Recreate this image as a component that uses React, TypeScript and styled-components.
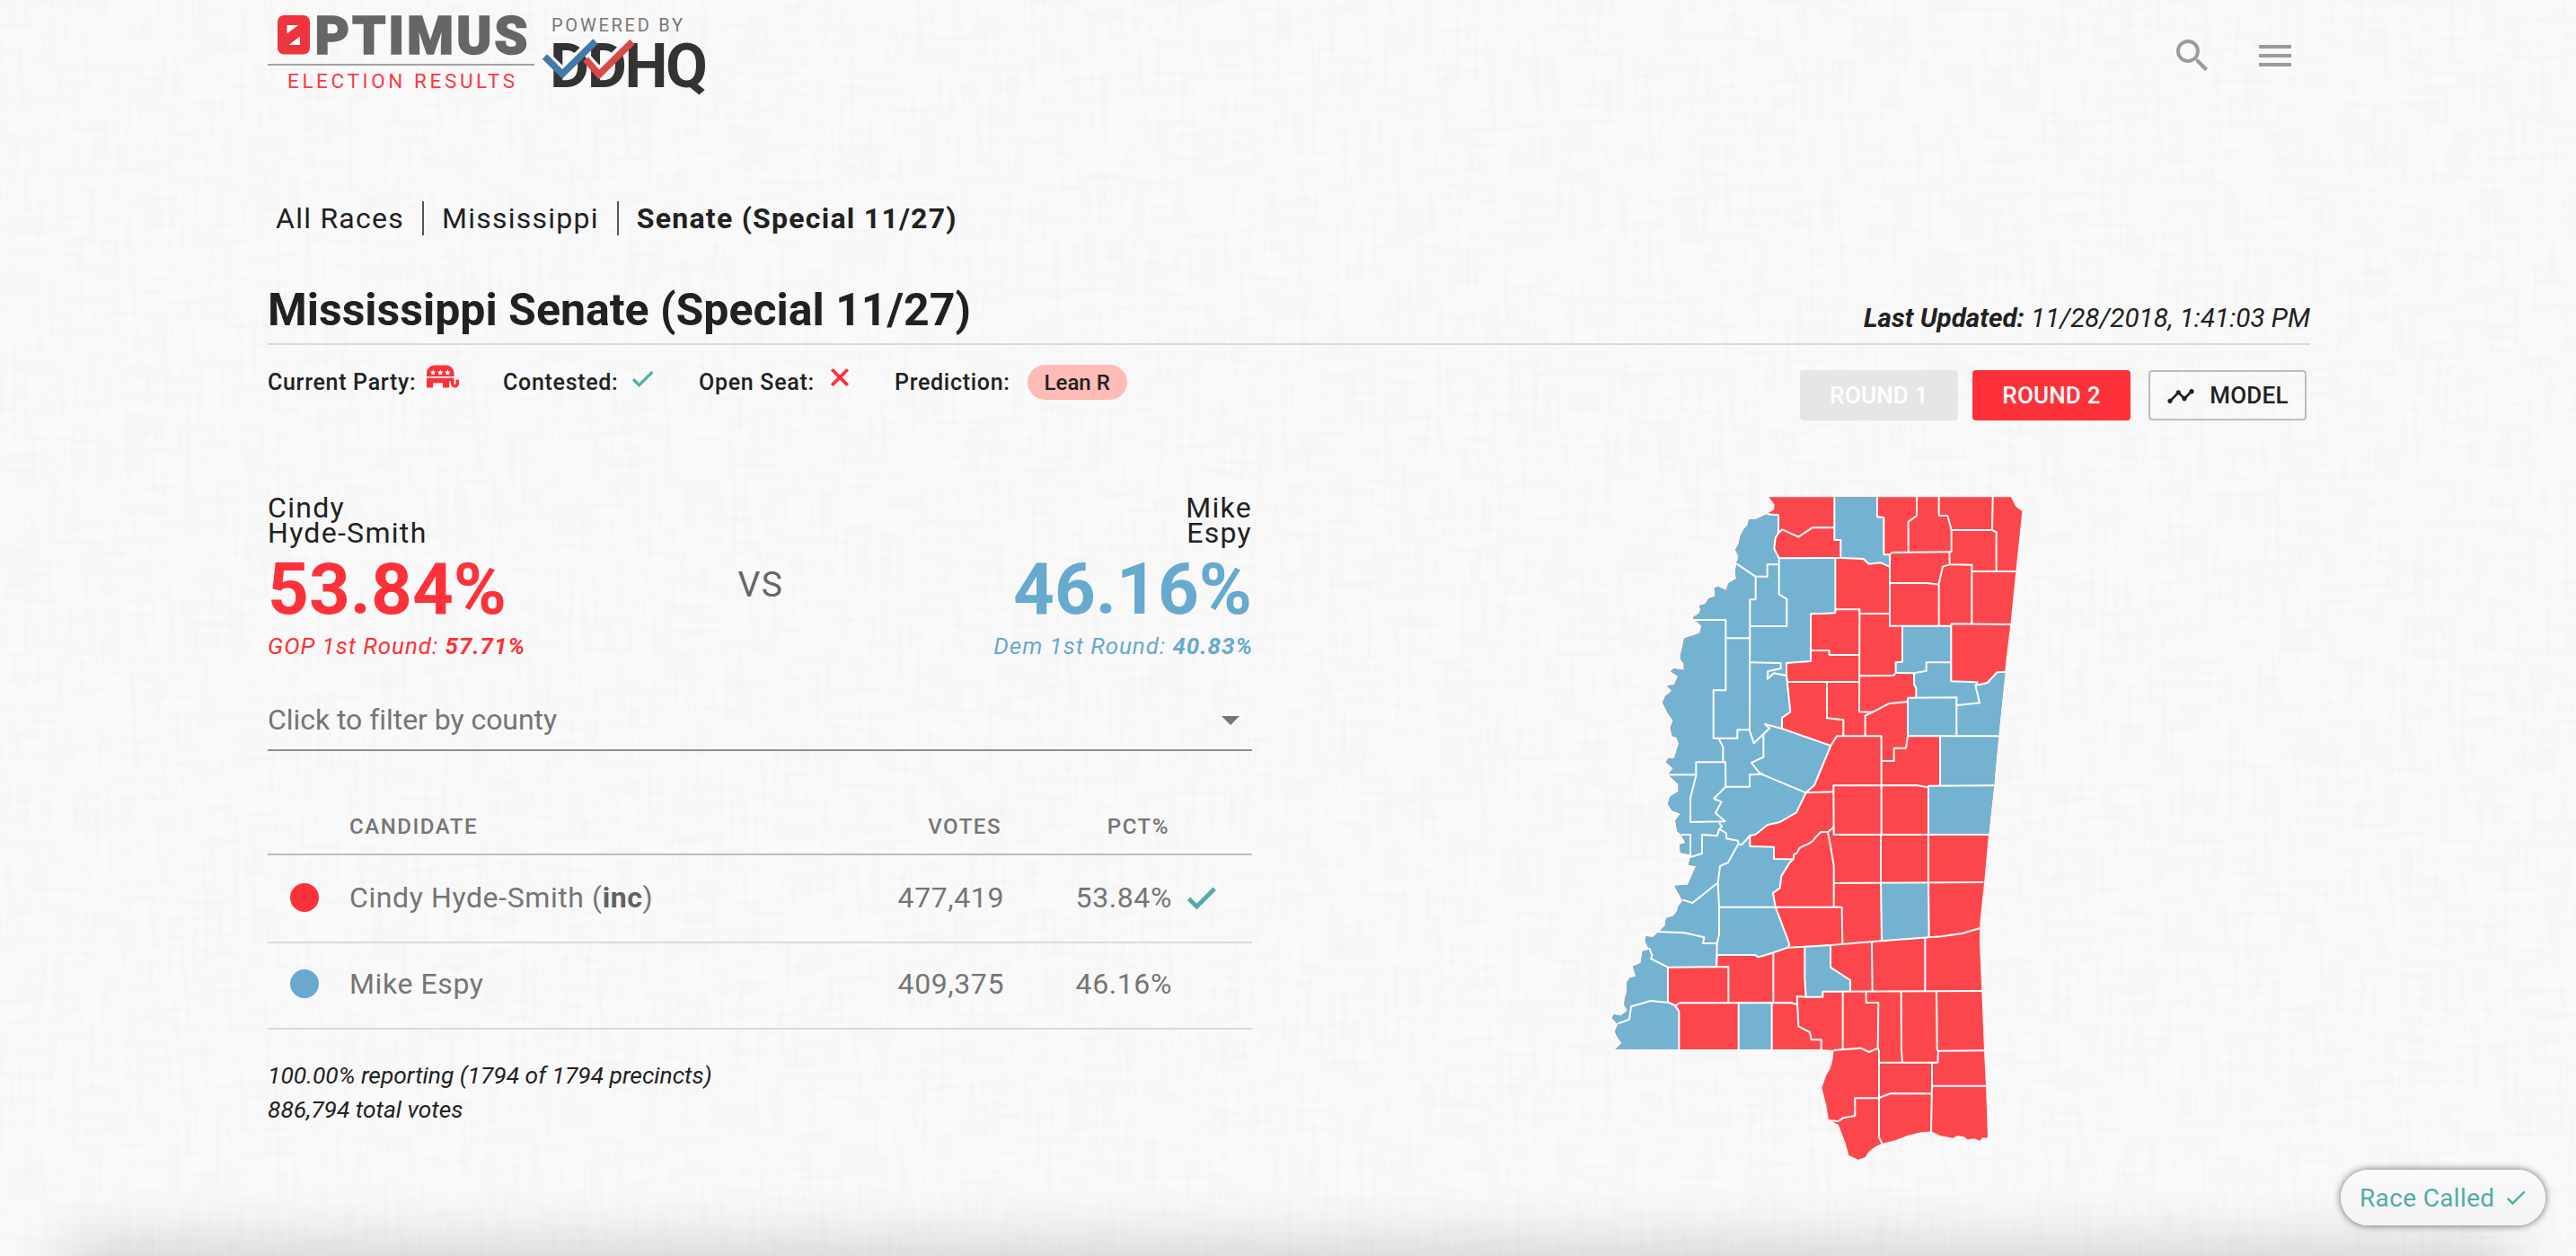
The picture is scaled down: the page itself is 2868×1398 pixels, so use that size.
import React from "react";
import styled, { createGlobalStyle } from "styled-components";
import { MdSearch, MdMenu, MdCheck, MdClose, MdTimeline, MdArrowDropDown } from "react-icons/md";
import { FaRepublican } from "react-icons/fa";

const GOP = "#fd3139";
const DEM = "#67a9cf";
const TEAL = "#4fada7";
const INK = "#212121";
const MUTED = "#757575";

const GlobalStyle = createGlobalStyle`
  html, body { margin: 0; padding: 0; }
  body {
    background: #fafafa;
    color: ${INK};
    font-family: Roboto, "Liberation Sans", sans-serif;
    overflow: hidden;
  }
  * { box-sizing: border-box; }
  svg path[fill="none"] { stroke: none; }
`;

const Page = styled.div`
  position: relative;
  width: 100%;
  height: 1398px;
  overflow: hidden;
`;

const Linen = styled.svg`
  position: absolute;
  inset: 0;
  width: 100%;
  height: 100%;
`;

const Container = styled.div`
  position: relative;
  width: 2274px;
  margin: 0 auto 0 298px;
  display: flex;
  flex-direction: column;
`;

const Header = styled.header`
  height: 224px;
  display: flex;
  align-items: flex-start;
  justify-content: space-between;
`;

const Logo = styled.svg`
  display: block;
  width: 500px;
  height: 120px;
  font-family: Roboto, "Liberation Sans", sans-serif;
`;

const HeaderActions = styled.div`
  display: flex;
  gap: 44px;
  padding: 38px 15px 0 0;
  color: #9b9b9b;
  svg { display: block; }
`;

const Crumbs = styled.nav`
  display: flex;
  align-items: center;
  height: 38px;
  padding-left: 9px;
  font-size: 32px;
  line-height: 38px;
  letter-spacing: 1.25px;
`;

const Crumb = styled.span<{ $current?: boolean }>`
  font-weight: ${(p) => (p.$current ? 700 : 400)};
  height: 38px;
  & + & {
    margin-left: 20px;
    padding-left: 20px;
    border-left: 2px solid #555;
  }
`;

const TitleRow = styled.div`
  display: flex;
  justify-content: space-between;
  align-items: flex-end;
  margin-top: 53px;
  padding-bottom: 7px;
  border-bottom: 2px solid #dadada;
`;

const Title = styled.h1`
  margin: 0;
  font-size: 50px;
  line-height: 60px;
  font-weight: 700;
`;

const Updated = styled.div`
  font-size: 29.6px;
  line-height: 41px;
  font-style: italic;
  b { font-weight: 700; }
`;

const MetaRow = styled.div`
  display: flex;
  justify-content: space-between;
  align-items: flex-start;
  height: 84px;
`;

const Facts = styled.div`
  display: flex;
  padding-top: 22px;
  font-size: 25px;
  line-height: 40px;
  font-weight: 500;
  letter-spacing: 0.7px;
`;

const Fact = styled.div<{ $width: number; $gap?: number }>`
  display: flex;
  width: ${(p) => p.$width}px;
  gap: ${(p) => p.$gap ?? 12}px;
  svg { display: block; flex: none; }
`;

const Chip = styled.span`
  height: 39px;
  padding: 0 19px;
  border-radius: 20px;
  background: #ffbcb7;
  font-size: 24px;
  letter-spacing: 0;
`;

const Actions = styled.div`
  display: flex;
  padding: 28px 4px 0 0;
`;

const Button = styled.button<{ $kind: "off" | "on" | "outline" }>`
  width: 176px;
  height: 56px;
  margin-left: ${(p) => (p.$kind === "outline" ? 20 : 16)}px;
  padding: 1px 0 0;
  display: flex;
  align-items: center;
  justify-content: center;
  gap: 16px;
  border: ${(p) => (p.$kind === "outline" ? "2px solid #bdbdbd" : "0")};
  border-radius: 4px;
  background: ${(p) => (p.$kind === "off" ? "#e6e6e6" : p.$kind === "on" ? GOP : "transparent")};
  color: ${(p) => (p.$kind === "outline" ? INK : "#fff")};
  font: 500 26px/55px Roboto, "Liberation Sans", sans-serif;
  letter-spacing: 0.2px;
`;

const Content = styled.main`
  display: flex;
  align-items: flex-start;
  margin-top: 83px;
`;

const Results = styled.section`
  width: 1096px;
  display: flex;
  flex-direction: column;
`;

const Duel = styled.div`
  display: flex;
  justify-content: space-between;
`;

const Contender = styled.div<{ $color: string; $right?: boolean }>`
  width: 400px;
  color: ${(p) => p.$color};
  text-align: ${(p) => (p.$right ? "right" : "left")};
`;

const Name = styled.div`
  color: ${INK};
  font-size: 32px;
  line-height: 28px;
  letter-spacing: 1.3px;
`;

const Percent = styled.div`
  margin-top: 9px;
  font-size: 80px;
  line-height: 80px;
  font-weight: 700;
`;

const FirstRound = styled.div`
  margin: 8px -1px 0 0;
  font-size: 26px;
  line-height: 30px;
  font-style: italic;
  letter-spacing: 0.95px;
`;

const Versus = styled.div`
  padding: 80px 0 0 2px;
  font-size: 39px;
  line-height: 40px;
  letter-spacing: 1.5px;
  color: #666;
`;

const Filter = styled.div`
  display: flex;
  justify-content: space-between;
  align-items: center;
  height: 71px;
  margin-top: 31px;
  padding-top: 2px;
  border-bottom: 2px solid #8f8f8f;
  color: ${MUTED};
  font-size: 32px;
  letter-spacing: -0.05px;
`;

const Row = styled.div<{ $head?: boolean; $first?: boolean }>`
  display: grid;
  grid-template-columns: ${(p) => (p.$head ? "91px 1fr 180px 187px 92px" : "91px 1fr 180px 187px 89px")};
  align-items: center;
  height: ${(p) => (p.$head ? 64 : p.$first ? 98 : 96)}px;
  margin-top: ${(p) => (p.$head ? 52 : 0)}px;
  padding-top: ${(p) => (p.$head ? 1 : 0)}px;
  padding-bottom: ${(p) => (p.$head ? 0 : p.$first ? 2 : 4)}px;
  border-bottom: 2px solid ${(p) => (p.$head ? "#bdbdbd" : "#dadada")};
  color: ${MUTED};
  font-size: ${(p) => (p.$head ? 24 : 32)}px;
  font-weight: ${(p) => (p.$head ? 500 : 400)};
  letter-spacing: ${(p) => (p.$head ? 1.55 : 0.6)}px;
  b { color: #616161; font-weight: 700; }
  svg { display: block; margin-left: 12px; }
`;

const Cell = styled.div<{ $right?: boolean }>`
  text-align: ${(p) => (p.$right ? "right" : "left")};
`;

const Dot = styled.span<{ $color: string }>`
  width: 32px;
  height: 32px;
  margin-left: 25px;
  border-radius: 50%;
  background: ${(p) => p.$color};
`;

const Reporting = styled.div`
  margin-top: 32px;
  font-size: 26.4px;
  line-height: 38px;
  font-style: italic;
`;

const CountyMap = styled.svg`
  display: block;
  width: 464px;
  height: 742px;
  margin-left: 396px;
`;

const FooterEdge = styled.div`
  position: absolute;
  left: 80px;
  right: 80px;
  top: 1402px;
  height: 40px;
  box-shadow: 0 0 70px 10px rgba(0, 0, 0, 0.2);
`;

const RaceCalled = styled.div`
  position: absolute;
  right: 34px;
  bottom: 34px;
  width: 228px;
  height: 62px;
  display: flex;
  align-items: center;
  gap: 9px;
  padding-left: 21px;
  border-radius: 31px;
  background: linear-gradient(#fafafa, #f4f4f4);
  box-shadow: 0 0 8px rgba(0, 0, 0, 0.6);
  color: ${TEAL};
  font-size: 28px;
  letter-spacing: 0.35px;
`;

const STATE =
  "568,40 1377,40 1393,72 1414,87 1393,288 1375,465 1362,570 1335,838 1320,1003 1302,1167 1288,1320 1273,1460 1272,1530 1279,1690 1287,1888 1293,2006 1299,2175 1295,2180 1282,2178 1273,2189 1255,2182 1232,2185 1220,2176 1199,2172 1183,2180 1140,2172 1111,2158 1075,2161 1030,2172 990,2188 946,2198 925,2208 902,2225 890,2244 866,2252 835,2237 825,2200 810,2160 800,2135 768,2120 760,2070 745,2012 760,1970 772,1950 780,1925 785,1887 744,1884 55,1884 77,1864 62,1842 54,1825 64,1800 44,1780 50,1768 73,1772 96,1755 85,1735 87,1715 94,1690 94,1660 103,1646 124,1640 114,1607 140,1596 146,1557 168,1551 155,1522 158,1507 180,1510 205,1488 222,1470 225,1446 247,1440 262,1423 265,1408 280,1388 253,1338 297,1335 325,1272 300,1268 306,1240 303,1233 273,1227 270,1200 290,1195 275,1167 262,1155 256,1120 273,1097 245,1087 231,1065 238,1040 266,1023 266,998 232,967 248,946 225,925 232,912 252,913 267,863 260,842 245,838 239,810 248,787 230,760 213,726 222,705 244,687 228,670 252,667 265,638 240,622 250,613 284,618 284,595 275,585 272,570 280,540 285,512 300,507 337,495 343,470 330,457 316,450 316,440 334,430 340,418 336,403 356,397 367,378 389,372 386,345 397,338 425,352 433,328 459,312 456,290 460,262 467,238 456,215 468,195 472,172 485,147 498,133 501,115 524,115 562,97 568,92 585,82 587,65";

const DEM_AREAS = [
  "562,97 600,100 600,160 590,176 586,212 602,244 790,245 788,427 708,430 708,588 627,594 627,636 640,757 612,777 612,813 775,870 720,1002 692,1027 660,1093 605,1125 563,1135 523,1167 505,1170 505,1206 585,1208 585,1248 645,1249 638,1260 610,1305 605,1345 582,1362 590,1408 637,1533 632,1544 580,1562 533,1576 522,1569 395,1569 393,1607 231,1610 231,1727 255,1738 268,1757 268,1884 55,1884 77,1864 62,1842 54,1825 64,1800 44,1780 50,1768 73,1772 96,1755 85,1735 87,1715 94,1690 94,1660 103,1646 124,1640 114,1607 140,1596 146,1557 168,1551 155,1522 158,1507 180,1510 205,1488 222,1470 225,1446 247,1440 262,1423 265,1408 280,1388 253,1338 297,1335 325,1272 300,1268 306,1240 303,1233 273,1227 270,1200 290,1195 275,1167 262,1155 256,1120 273,1097 245,1087 231,1065 238,1040 266,1023 266,998 232,967 248,946 225,925 232,912 252,913 267,863 260,842 245,838 239,810 248,787 230,760 213,726 222,705 244,687 228,670 252,667 265,638 240,622 250,613 284,618 284,595 275,585 272,570 280,540 285,512 300,507 337,495 343,470 330,457 316,450 316,440 334,430 340,418 336,403 356,397 367,378 389,372 386,345 397,338 425,352 433,328 459,312 456,290 460,262 467,238 456,215 468,195 472,172 485,147 498,133 501,115 524,115",
  "787,40 930,40 930,106 952,108 952,232 972,232 970,272 942,259 902,263 884,246 808,243 808,183 787,183",
  "1014,470 1177,470 1177,655 1265,658 1258,669 1298,660 1330,625 1358,623 1335,838 1032,838 1032,710 1060,708 1060,678 1053,665 1053,628 992,627 992,592 1014,590",
  "1140,838 1335,838 1320,1003 1140,1003",
  "1101,1006 1320,1003 1302,1166 1101,1166",
  "944,1330 1101,1328 1103,1510 945,1520",
  "688,1543 774,1536 774,1610 840,1653 840,1690 748,1692 748,1709 692,1709 688,1648",
  "467,1730 578,1730 578,1884 467,1884",
];

const BORDERS = [
  "562,97 600,100 600,160 590,176 586,212 602,244",
  "600,160 613,148 667,173 713,142 787,142",
  "787,40 787,183 808,183 808,243",
  "602,244 808,243 884,246 902,263 942,259 970,272",
  "930,40 930,106 952,108 952,232 972,232 980,225 1178,223",
  "1062,40 1062,102 1034,122 1034,222",
  "1136,40 1136,101 1165,102 1178,150 1178,223",
  "1178,150 1314,150",
  "1316,40 1314,150 1328,157 1328,287",
  "1171,223 1172,265 1246,266 1246,465",
  "1172,265 1149,272 1135,332 1097,327 973,327",
  "1136,332 1136,468",
  "1246,288 1393,288",
  "972,232 972,470 1176,470 1178,463 1375,465",
  "790,244 790,428",
  "790,415 871,415 871,429 972,429",
  "790,427 708,430 708,588 625,594",
  "602,244 602,365 628,380 628,471 505,471",
  "460,262 523,305 563,305 563,265 602,265",
  "524,305 524,382 505,382 504,817",
  "316,450 424,450 424,685 383,685 383,845 463,845 463,817 503,817 518,862 570,812 555,798 612,813 775,870",
  "427,511 505,511",
  "504,592 608,594 608,612 565,622 563,647 585,628 627,636",
  "627,594 627,636 640,757 612,777 612,813",
  "871,429 870,757 915,758",
  "708,552 770,552 770,567 870,567",
  "1014,470 1014,590 992,592 992,627 985,635 870,637",
  "992,627 1053,628 1094,620 1094,592 1177,592",
  "630,657 870,657",
  "762,658 762,778 817,784 817,838",
  "1032,723 968,730 915,758 890,770 890,838",
  "775,870 795,838 944,838 944,921 986,921 986,878 1026,878 1032,838",
  "1335,838 1032,838 1032,710 1195,709 1195,838",
  "1197,735 1272,727 1258,669 1265,658 1177,655 1177,465",
  "1258,669 1298,660 1330,625 1358,623",
  "1053,628 1053,665 1060,678 1060,708",
  "1140,838 1140,1003",
  "775,870 720,1002 692,1027 660,1093 605,1125 563,1135 523,1167 505,1170 505,1206 585,1208 585,1248 650,1249",
  "1320,1003 1102,1004 1098,1009 1060,1002 784,1003 785,1167 1302,1167",
  "692,1027 784,1024",
  "944,921 944,1165 942,1170 942,1320 945,1521",
  "1101,1006 1101,1328 1103,1510",
  "785,1142 765,1158 742,1158 725,1175 715,1188 700,1198 685,1204 670,1212 662,1228 652,1233 650,1249 638,1260 610,1305 605,1345 582,1362 590,1408 637,1533 632,1544",
  "765,1158 775,1210 785,1270 785,1408",
  "401,1409 812,1409 814,1530",
  "785,1329 1285,1326",
  "393,1607 395,1569 522,1569 533,1576 580,1562 632,1544 688,1541 774,1536 945,1522 1103,1510 1145,1507 1213,1497 1272,1480",
  "465,1200 432,1260 405,1272 398,1328 402,1410 402,1500 395,1530 393,1607",
  "280,1385 313,1395 395,1330",
  "195,1491 287,1495 352,1510 348,1530 395,1530",
  "168,1545 178,1570 174,1581 231,1610 433,1608 433,1727",
  "583,1563 583,1727",
  "688,1543 688,1648 692,1709 662,1707 667,1807 705,1827 710,1852 743,1852 743,1884",
  "255,1738 270,1729 640,1728 662,1734",
  "64,1798 102,1784 108,1741 173,1722 235,1728 255,1738 268,1757 268,1884",
  "231,1610 231,1727",
  "467,1728 467,1884",
  "578,1728 578,1884",
  "692,1709 748,1709 748,1691 1279,1689",
  "774,1536 774,1610 840,1653 840,1691",
  "815,1691 815,1884",
  "893,1690 893,1728 934,1728 932,1880 903,1893 875,1880 810,1885 785,1887",
  "932,1880 936,1890 936,2178 946,2198",
  "912,1525 914,1690",
  "1090,1512 1090,1690",
  "1010,1690 1011,1888 1014,1928",
  "1128,1690 1130,1888",
  "936,1928 1132,1928 1134,1889 1287,1888",
  "1113,1928 1113,2006 1110,2158",
  "1113,2006 1293,2006",
  "936,2046 975,2031 1111,2032",
  "936,2047 856,2047 856,2106 816,2113 800,2124 768,2122",
  "400,845 415,875 415,925",
  "232,967 325,967",
  "384,1047 424,1007 423,925 325,925 325,970 306,1045 306,1125 422,1123 390,1095 410,1057 384,1047",
  "424,1007 504,1007 504,967 545,965 537,962 510,927 550,908 550,832",
  "540,960 548,967 692,1027",
  "402,1128 412,1140 402,1148 426,1162 426,1180 465,1187 467,1200 478,1200 505,1170",
  "402,1148 396,1171 345,1167 345,1230 306,1242 306,1167 275,1167",
];

function Brand() {
  return (
    <Logo viewBox="298 0 500 120">
      <rect x="309" y="17" width="36" height="43.5" rx="7" fill="#ee343d" />
      <path d="M319.5 28H332L319.5 37.5ZM334 40.5V50H321.5Z" fill="#fff" />
      <text
        x="350.5"
        y="60"
        fontSize="59.5"
        fontWeight="900"
        fill="#666"
        stroke="#666"
        strokeWidth="1.5"
        textLength="237"
      >
        PTIMUS
      </text>
      <rect x="298" y="71" width="297" height="2" fill="#a3a3a3" />
      <text x="320" y="98" fontSize="22.5" fill="#fb3a42" textLength="253">ELECTION RESULTS</text>
      <text x="614" y="35" fontSize="20" fill="#777" textLength="146">POWERED BY</text>
      <text x="612" y="97" fontSize="68" fontWeight="700" fill="#333" textLength="176">DDHQ</text>
      <g fill="none">
        <path d="M600 50.5L626 76L665 37" stroke="#fafafa" strokeWidth="5" />
        <path d="M648 55L667 76L706 37" stroke="#fafafa" strokeWidth="5" />
        <path d="M606.5 63L626 82.5L663 46" stroke="#4678a8" strokeWidth="7.5" />
        <path d="M652 66L667 83L704 46.5" stroke="#d94b47" strokeWidth="7.5" />
      </g>
    </Logo>
  );
}

const ROWS = [
  { name: "Cindy Hyde-Smith", inc: true, votes: "477,419", pct: "53.84%", color: GOP, won: true },
  { name: "Mike Espy", inc: false, votes: "409,375", pct: "46.16%", color: DEM, won: false },
];

export default function App() {
  return (
    <Page>
      <GlobalStyle />
      <Linen aria-hidden="true">
        <filter id="warp" x="0" y="0" width="100%" height="100%">
          <feTurbulence type="fractalNoise" baseFrequency="0.15 0.015" numOctaves="2" seed="3" />
          <feColorMatrix values="0 0 0 0 0  0 0 0 0 0  0 0 0 0 0  0.03 0 0 0 -0.012" />
        </filter>
        <filter id="weft" x="0" y="0" width="100%" height="100%">
          <feTurbulence type="fractalNoise" baseFrequency="0.015 0.15" numOctaves="2" seed="8" />
          <feColorMatrix values="0 0 0 0 0  0 0 0 0 0  0 0 0 0 0  0.03 0 0 0 -0.012" />
        </filter>
        <rect width="100%" height="100%" filter="url(#warp)" />
        <rect width="100%" height="100%" filter="url(#weft)" />
      </Linen>
      <Container>
        <Header>
          <Brand />
          <HeaderActions>
            <MdSearch size={48} />
            <MdMenu size={48} />
          </HeaderActions>
        </Header>
        <Crumbs>
          <Crumb>All Races</Crumb>
          <Crumb>Mississippi</Crumb>
          <Crumb $current>Senate (Special 11/27)</Crumb>
        </Crumbs>
        <TitleRow>
          <Title>Mississippi Senate (Special 11/27)</Title>
          <Updated>
            <b>Last Updated:</b> 11/28/2018, 1:41:03 PM
          </Updated>
        </TitleRow>
        <MetaRow>
          <Facts>
            <Fact $width={262}>
              Current Party:
              <FaRepublican size={36} color={GOP} style={{ marginTop: -5 }} />
            </Fact>
            <Fact $width={218}>
              Contested:
              <MdCheck size={31} color={TEAL} stroke={TEAL} strokeWidth={0.7} />
            </Fact>
            <Fact $width={218}>
              Open Seat:
              <MdClose size={32} color={GOP} stroke={GOP} strokeWidth={0.8} style={{ marginTop: -2 }} />
            </Fact>
            <Fact $width={262} $gap={19}>
              Prediction:
              <Chip>Lean R</Chip>
            </Fact>
          </Facts>
          <Actions>
            <Button $kind="off">ROUND 1</Button>
            <Button $kind="on">ROUND 2</Button>
            <Button $kind="outline">
              <MdTimeline size={32} />
              MODEL
            </Button>
          </Actions>
        </MetaRow>
        <Content>
          <Results>
            <Duel>
              <Contender $color={GOP}>
                <Name>Cindy<br />Hyde-Smith</Name>
                <Percent>53.84%</Percent>
                <FirstRound>GOP 1st Round: <b>57.71%</b></FirstRound>
              </Contender>
              <Versus>VS</Versus>
              <Contender $color={DEM} $right>
                <Name>Mike<br />Espy</Name>
                <Percent>46.16%</Percent>
                <FirstRound>Dem 1st Round: <b>40.83%</b></FirstRound>
              </Contender>
            </Duel>
            <Filter>
              Click to filter by county
              <MdArrowDropDown size={48} />
            </Filter>
            <Row $head>
              <Cell />
              <Cell>CANDIDATE</Cell>
              <Cell $right>VOTES</Cell>
              <Cell $right>PCT%</Cell>
            </Row>
            {ROWS.map((r) => (
              <Row key={r.name} $first={r.won}>
                <Dot $color={r.color} />
                <Cell>
                  {r.name}
                  {r.inc && <> (<b>inc</b>)</>}
                </Cell>
                <Cell $right>{r.votes}</Cell>
                <Cell $right>{r.pct}</Cell>
                {r.won && <MdCheck size={41} color={TEAL} stroke={TEAL} strokeWidth={0.8} />}
              </Row>
            ))}
            <Reporting>
              100.00% reporting (1794 of 1794 precincts)
              <br />
              886,794 total votes
            </Reporting>
          </Results>
          <CountyMap viewBox="30 33 1392 2226">
            <polygon points={STATE} fill="#fb474c" />
            {DEM_AREAS.map((p) => (
              <polygon key={p} points={p} fill="#74b2d2" />
            ))}
            <g fill="none" stroke="#fff" strokeWidth="6" strokeLinejoin="round">
              {BORDERS.map((p) => (
                <polyline key={p} points={p} />
              ))}
            </g>
          </CountyMap>
        </Content>
      </Container>
      <FooterEdge />
      <RaceCalled>
        Race Called
        <MdCheck size={28} />
      </RaceCalled>
    </Page>
  );
}
